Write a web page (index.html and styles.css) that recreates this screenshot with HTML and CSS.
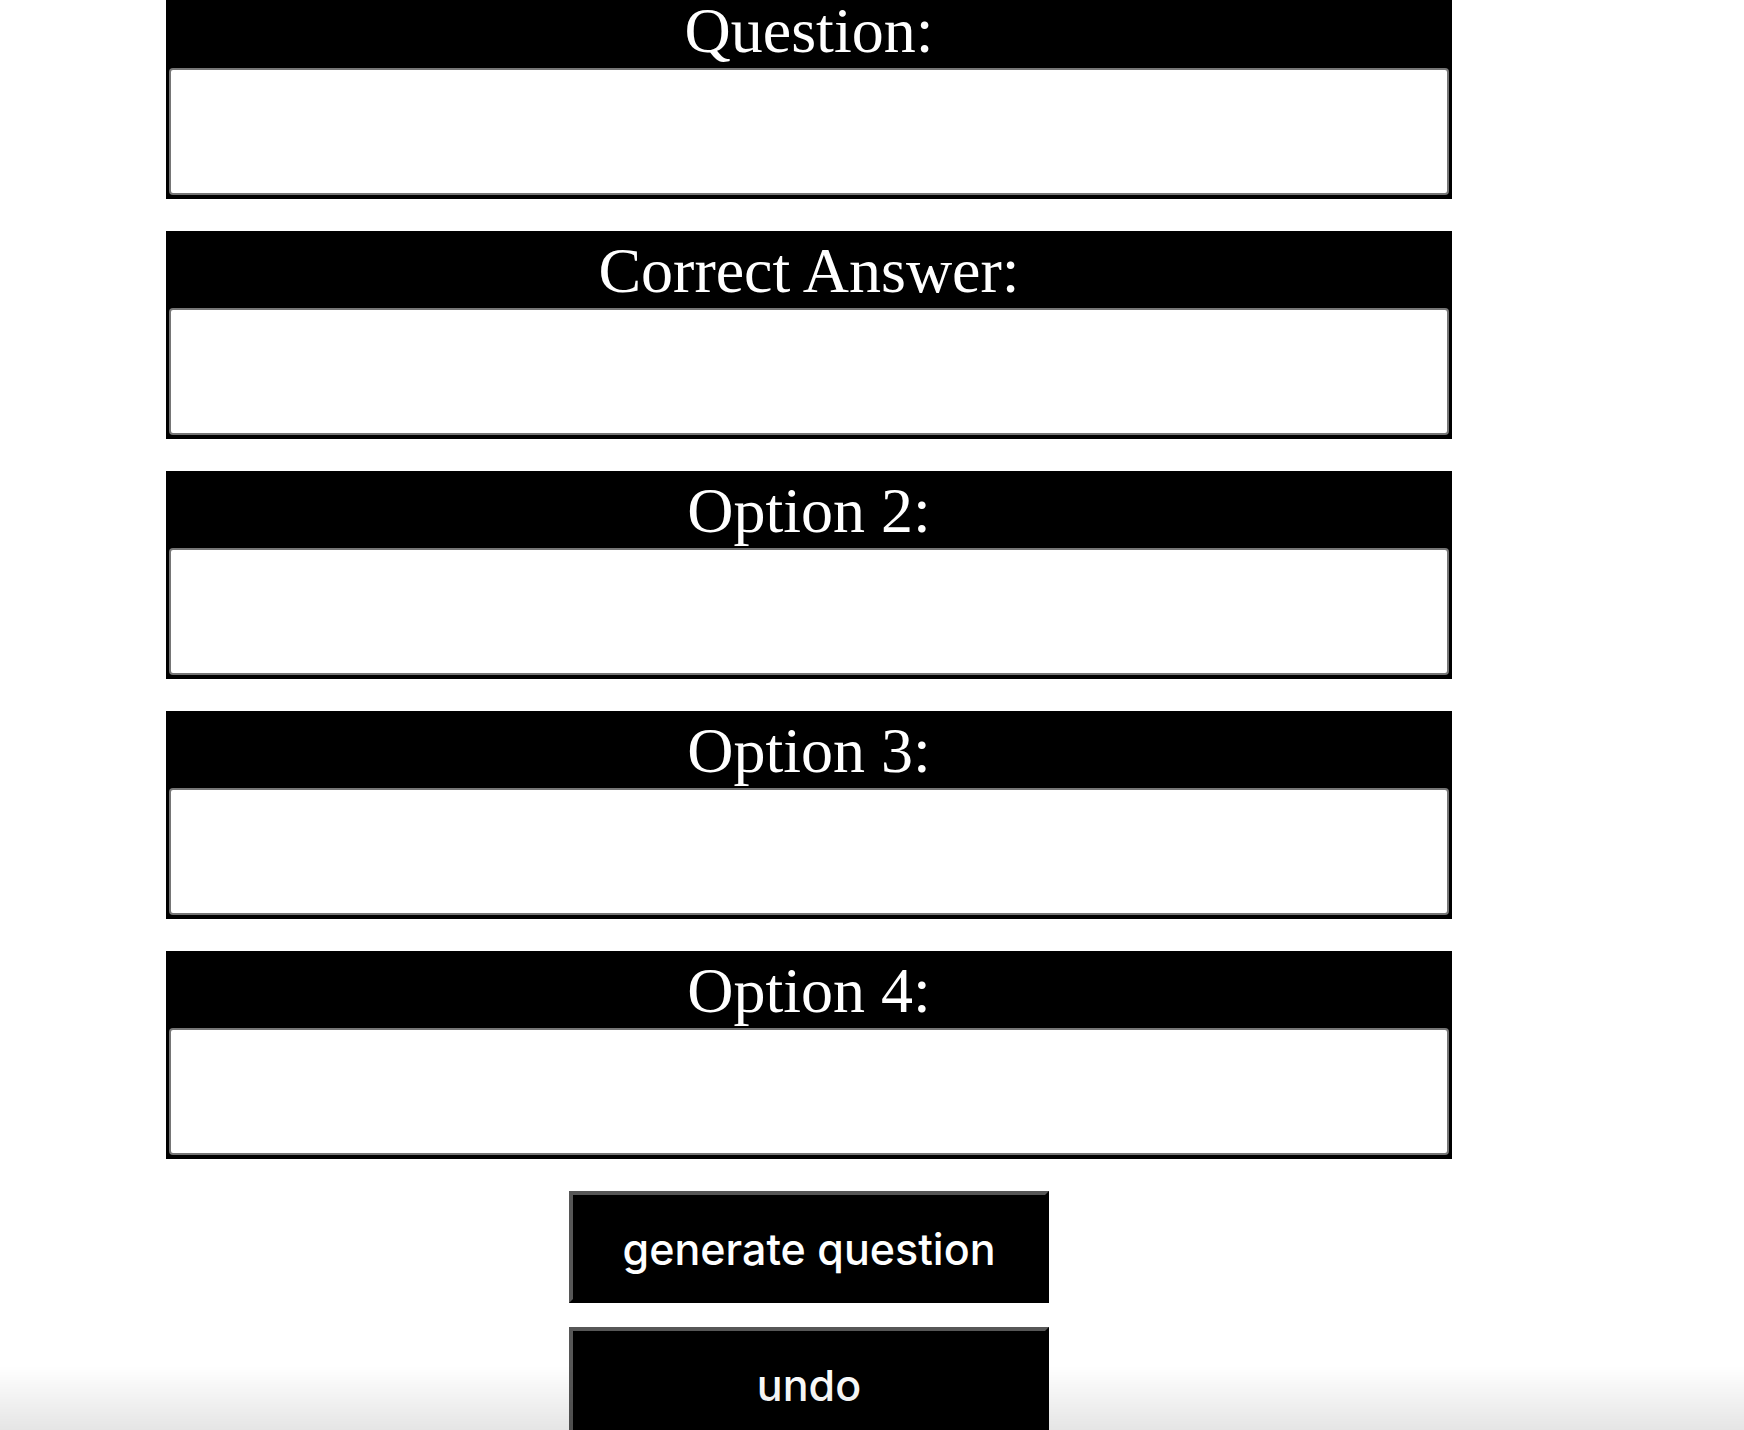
FILE: index.html
```html
<!DOCTYPE html>
<html>
<head>
<meta charset="utf-8">
<link rel="stylesheet" href="styles.css">
</head>
<body>
<div class="form">
  <div class="field">
    <div class="label">Question:</div>
    <textarea class="input"></textarea>
  </div>
  <div class="field">
    <div class="label">Correct Answer:</div>
    <textarea class="input"></textarea>
  </div>
  <div class="field">
    <div class="label">Option 2:</div>
    <textarea class="input"></textarea>
  </div>
  <div class="field">
    <div class="label">Option 3:</div>
    <textarea class="input"></textarea>
  </div>
  <div class="field">
    <div class="label">Option 4:</div>
    <textarea class="input"></textarea>
  </div>
  <div class="actions">
    <button class="btn">generate question</button>
    <button class="btn">undo</button>
  </div>
</div>
<div class="fade"></div>
</body>
</html>
```
FILE: styles.css
```css
html, body {
  margin: 0;
  padding: 0;
  background: #fff;
  overflow: hidden;
}
body {
  height: 1430px;
}
.form {
  margin-left: 166px;
  margin-top: -9px;
  width: 1286px;
  display: flex;
  flex-direction: column;
  gap: 32px;
}
.field {
  background: #000;
  padding: 3px 3px 4px 3px;
  display: flex;
  flex-direction: column;
}
.label {
  font-family: "Liberation Serif", "Times New Roman", serif;
  font-size: 64px;
  line-height: 74px;
  height: 74px;
  color: #fff;
  text-align: center;
}
.input {
  display: block;
  box-sizing: border-box;
  width: 1280px;
  height: 127px;
  margin: 0;
  border: 2px solid #767676;
  border-radius: 4px;
  background: #fff;
  resize: none;
  outline: none;
}
.actions {
  display: flex;
  flex-direction: column;
  align-items: center;
  gap: 24px;
}
.btn {
  box-sizing: border-box;
  width: 480px;
  height: 112px;
  background: #000;
  color: #fff;
  border-style: solid;
  border-width: 4px;
  border-color: #575757 #000 #000 #575757;
  font-family: Inter, "Noto Sans", sans-serif;
  font-size: 43px;
  font-weight: 500;
  padding: 4px 0 0 0;
  margin: 0;
}
.fade {
  position: fixed;
  left: 0;
  right: 0;
  bottom: 0;
  height: 64px;
  background: linear-gradient(rgba(0,0,0,0), rgba(0,0,0,0.1));
  pointer-events: none;
}
```
